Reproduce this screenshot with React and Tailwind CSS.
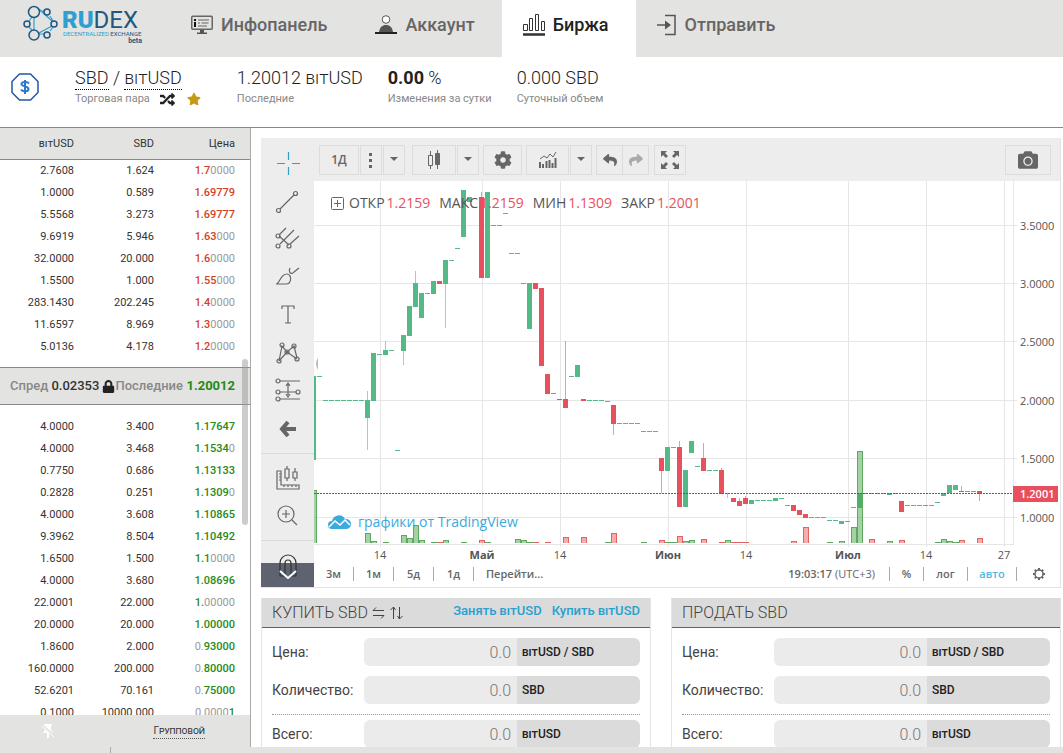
import React, { useState } from "react";
import { FaCamera, FaCog, FaLock, FaRandom, FaReply, FaShare, FaStar } from "react-icons/fa";

const asks = [
    ["2.7608", "1.624", "", "1.7", "0000"],
    ["1.0000", "0.589", "", "1.69779", ""],
    ["5.5568", "3.273", "", "1.69777", ""],
    ["9.6919", "5.946", "", "1.63", "000"],
    ["32.0000", "20.000", "", "1.6", "0000"],
    ["1.5500", "1.000", "", "1.55", "000"],
    ["283.1430", "202.245", "", "1.4", "0000"],
    ["11.6597", "8.969", "", "1.3", "0000"],
    ["5.0136", "4.178", "", "1.2", "0000"],
];

const bids = [
    ["4.0000", "3.400", "", "1.17647", ""],
    ["4.0000", "3.468", "", "1.1534", "0"],
    ["0.7750", "0.686", "", "1.13133", ""],
    ["0.2828", "0.251", "", "1.1309", "0"],
    ["4.0000", "3.608", "", "1.10865", ""],
    ["9.3962", "8.504", "", "1.10492", ""],
    ["1.6500", "1.500", "", "1.1", "0000"],
    ["4.0000", "3.680", "", "1.08696", ""],
    ["22.0001", "22.000", "", "1.", "00000"],
    ["20.0000", "20.000", "", "1.00000", ""],
    ["1.8600", "2.000", "0.", "93000", ""],
    ["160.0000", "200.000", "0.", "80000", ""],
    ["52.6201", "70.161", "0.", "75000", ""],
    ["0.1000", "10000.000", "0.0000", "1", ""],
];

const UP = "#53b987";
const DOWN = "#e8505e";

// [day, direction, body top, body bottom, wick top, wick bottom], day 0 is 14 April
const candles = [
    [-11, 1, 195, 279], [-10, 1, 195, 196],
    [-9, 1, 219, 220], [-8, 1, 219, 220], [-7, 1, 219, 220], [-6, 1, 219, 220],
    [-5, 1, 219, 220], [-4, 1, 219, 220], [-3, 1, 219, 220],
    [-2, 1, 219, 237, 210, 269], [-1, 1, 172, 220], [0, 1, 173, 174], [1, 1, 169, 174, 160, 174],
    [2, 1, 169, 170], [3, 1, 269, 270], [4, 1, 154, 170, 154, 184], [5, 1, 125, 155],
    [6, 1, 102, 126, 90, 126], [7, 1, 112, 137], [8, 1, 112, 113], [9, 1, 100, 113],
    [10, 0, 100, 103], [11, 1, 79, 103, 79, 147], [12, 1, 79, 80], [13, 1, 67, 68],
    [14, 1, 9, 56], [15, 1, 16, 21], [17, 0, 16, 97, 11, 97], [18, 1, 11, 97],
    [19, 1, 44, 45], [20, 1, 44, 45], [21, 1, 32, 33], [22, 1, 72, 73], [23, 1, 72, 73],
    [24, 1, 102, 103], [25, 1, 102, 148], [26, 0, 102, 108], [27, 0, 107, 185],
    [28, 0, 193, 213], [29, 1, 212, 213], [30, 0, 218, 219], [31, 0, 218, 227, 160, 227],
    [32, 1, 195, 196], [33, 1, 184, 196], [34, 0, 218, 220], [35, 1, 219, 220],
    [36, 1, 219, 220], [37, 1, 219, 220], [38, 1, 220, 221], [39, 0, 224, 243, 224, 254],
    [40, 1, 242, 243], [41, 1, 242, 243], [42, 1, 242, 243], [43, 1, 242, 243],
    [44, 1, 250, 251], [45, 1, 250, 251], [46, 1, 250, 251],
    [47, 0, 277, 290, 277, 312], [48, 1, 266, 290], [49, 1, 266, 267],
    [50, 0, 266, 326, 260, 326], [51, 1, 289, 326], [52, 1, 260, 272], [53, 1, 285, 286],
    [54, 0, 277, 290, 262, 290], [55, 1, 289, 290], [56, 1, 289, 290],
    [57, 0, 289, 313, 287, 313], [58, 1, 312, 313, 312, 317], [59, 0, 317, 321],
    [60, 0, 320, 325, 317, 325], [61, 0, 317, 323, 315, 323], [62, 1, 319, 323],
    [63, 1, 319, 320], [64, 1, 319, 320], [65, 1, 319, 320], [66, 1, 317, 320],
    [67, 1, 317, 318], [68, 1, 324, 325], [69, 0, 324, 330], [70, 0, 329, 334],
    [71, 0, 333, 337], [72, 1, 336, 337], [73, 1, 336, 337], [74, 1, 336, 337],
    [75, 1, 339, 340], [76, 1, 339, 340], [77, 1, 340, 343], [78, 1, 340, 341],
    [79, 1, 326, 327], [80, 1, 312, 327], [81, 1, 312, 313], [82, 1, 312, 313],
    [83, 1, 312, 313], [84, 1, 312, 313], [85, 1, 312, 314], [86, 1, 312, 313],
    [87, 0, 320, 331], [88, 1, 324, 325], [89, 1, 324, 325], [90, 1, 324, 325],
    [91, 1, 324, 325], [92, 1, 324, 325], [93, 1, 321, 322], [94, 1, 312, 315],
    [95, 1, 304, 312], [96, 1, 304, 309], [97, 0, 310, 311, 305, 311],
    [98, 1, 310, 311], [99, 1, 310, 311], [100, 0, 310, 313, 310, 320],
];

// [day, direction, bar height]
const volumes = [
    [-11, 1, 53], [-2, 1, 10], [-1, 1, 2], [1, 1, 1], [4, 1, 8], [5, 1, 5], [6, 1, 18], [7, 1, 3],
    [9, 1, 1], [10, 0, 1], [11, 1, 3], [14, 1, 1], [17, 0, 3], [18, 1, 1], [23, 1, 4], [24, 1, 3],
    [25, 1, 1], [26, 0, 1], [28, 0, 1], [31, 0, 6], [34, 0, 6], [38, 1, 1], [39, 0, 10],
    [44, 1, 1], [47, 0, 3], [48, 1, 1], [49, 1, 1], [50, 0, 7], [51, 1, 2], [52, 1, 3],
    [54, 0, 4], [57, 0, 1], [58, 1, 3], [59, 0, 1], [60, 0, 1], [61, 0, 1], [69, 0, 2],
    [71, 0, 16], [75, 1, 1], [77, 1, 2], [79, 1, 16], [80, 1, 92], [82, 0, 4], [85, 1, 2],
    [87, 0, 3], [93, 1, 1], [94, 1, 4], [95, 1, 2], [96, 1, 1], [97, 0, 3], [100, 0, 5],
];

const months = [
    [66, "14"], [168, "Май", true], [246, "14"], [354, "Июн", true],
    [432, "14"], [534, "Июл", true], [612, "14"], [690, "27"],
];

const prices = [
    [44, "3.5000"], [102, "3.0000"], [160, "2.5000"],
    [219, "2.0000"], [277, "1.5000"], [336, "1.0000"],
];

const BitUsd = () => <span className="[font-variant:small-caps]">bitUSD</span>;

const Logo = () => (
    <svg width="122" height="46" viewBox="0 0 122 46" role="img" aria-label="RuDEX">
        <g fill="none" stroke="#2e9fd0" strokeWidth="1.2">
            <path d="M12 17v13M7 21l3-4M7 27l3 3M17 9l13 12M17 33l13-7M17 11l5 0M28 16l3 5M17 34l5 0M28 31l3-4" />
        </g>
        <g fill="none" stroke="#22577e" strokeWidth="1.5">
            <circle cx="12" cy="12" r="5.5" />
            <circle cx="25" cy="12" r="3" />
            <circle cx="5" cy="24" r="3" />
            <circle cx="32" cy="24" r="3" />
            <circle cx="12" cy="35" r="5" />
            <circle cx="25" cy="35" r="3" />
        </g>
        <text x="40" y="28" fontSize="24" fontWeight="900" fill="#2e9fd0">
            RU<tspan fontWeight="400" fill="#22577e">DEX</tspan>
        </text>
        <text x="41" y="36" fontSize="6" fill="#2e9fd0">DECENTRALIZED <tspan fill="#22577e">EXCHANGE</tspan></text>
        <text x="120" y="43" fontSize="7" fontWeight="700" fill="#22577e" textAnchor="end">beta</text>
    </svg>
);

const DashboardIcon = () => (
    <svg width="22" height="20" viewBox="0 0 22 20" fill="none" stroke="#666">
        <rect x=".75" y="1.25" width="20.5" height="13" rx="1" strokeWidth="1.5" />
        <path d="M7 5h11M7 8h2M10.500 8h7M7 11h9" />
        <path d="M4 4v2M4 7v5" stroke="#111" strokeWidth="2" />
        <path d="M9 15h4v2.500h3v1.500H6v-1.500h3z" fill="#555" stroke="none" />
    </svg>
);

const AccountIcon = () => (
    <svg width="22" height="20" viewBox="0 0 22 20">
        <circle cx="11" cy="4.500" r="3.800" fill="#fff" stroke="#555" />
        <path d="M4 17c1-5 3-7 7-7s6 2 7 7z" fill="#555" />
        <path d="M0 18h22" stroke="#222" strokeWidth="2" />
    </svg>
);

const ExchangeIcon = () => (
    <svg width="22" height="22" viewBox="0 0 22 22" fill="none" stroke="#333">
        <path d="M.5 10.500h4v6h-4zM6.500 4.500h3v12h-3zM12.500.5h3v16h-3zM18.500 7.500h3v9h-3z" />
        <path d="M0 20.500h22" strokeWidth="2.500" />
    </svg>
);

const SendIcon = () => (
    <svg width="20" height="22" viewBox="0 0 20 22" fill="none" stroke="#555" strokeWidth="1.500">
        <path d="M8 1.500h10v19H8M0 11h9" />
        <path d="M8 6.500v9l6-4.500z" fill="#555" stroke="none" />
    </svg>
);

const CoinIcon = () => (
    <svg width="28" height="28" viewBox="0 0 28 28" fill="none" stroke="#2457a5">
        <path d="M8.500 1h11L27 8.500v11L19.500 27h-11L1 19.500v-11z" strokeWidth="1.500" />
        <path d="M18 10.500c-1-1.500-6.500-2.500-7.500 0-1 3 7 2.500 7 5.500s-6 3-7.500.5M14 7v14" stroke="#2d78cc" strokeWidth="2" />
    </svg>
);

const tabs = [
    ["Инфопанель", DashboardIcon],
    ["Аккаунт", AccountIcon],
    ["Биржа", ExchangeIcon],
    ["Отправить", SendIcon],
];

const Header = () => {
    const [active, setActive] = useState("Биржа");

    return (
        <header className="flex h-[57px] shrink-0 bg-[#e3e3e1]">
            <a href="#home" className="w-[170px] shrink-0 pl-[22px]"><Logo /></a>
            <nav className="flex">
                {tabs.map(([name, Icon]) => (
                    <button
                        key={name}
                        onClick={() => setActive(name)}
                        className={`flex items-center gap-2 pr-[27px] pb-2 pl-[21px] text-lg font-medium ${active === name ? "bg-white text-[#222]" : "text-[#666]"}`}
                    >
                        <Icon />
                        {name}
                    </button>
                ))}
            </nav>
        </header>
    );
};

const MarketInfo = () => (
    <section className="flex h-[71px] shrink-0 border-b border-[#888] pt-2.5 pl-[11px] text-lg leading-[22px] font-light text-[#222]">
        <div className="mr-9 pt-1.5"><CoinIcon /></div>
        <div className="mr-9">
            <div>
                <a href="#sbd" className="inline-block border-b border-dotted border-black">SBD</a>
                {" / "}
                <a href="#bitusd" className="inline-block border-b border-dotted border-black"><BitUsd /></a>
            </div>
            <div className="flex h-[18px] items-center text-[11px] font-normal text-[#888]">
                Торговая пара
                <button aria-label="Поменять местами" className="ml-2.5 text-[15px] text-[#222]"><FaRandom /></button>
                <button aria-label="В избранное" className="ml-3 text-sm text-[#c79a16]"><FaStar /></button>
            </div>
        </div>
        <div className="mr-[25px]">
            <div>1.20012 <BitUsd /></div>
            <div className="text-[11px] leading-5 font-normal text-[#888]">Последние</div>
        </div>
        <div className="mr-[25px]">
            <div><b className="font-bold">0.00</b> %</div>
            <div className="text-[11px] leading-5 font-normal text-[#888]">Изменения за сутки</div>
        </div>
        <div>
            <div>0.000 SBD</div>
            <div className="text-[11px] leading-5 font-normal text-[#888]">Суточный объем</div>
        </div>
    </section>
);

const Orders = ({ rows, color }) => (
    <tbody>
        {rows.map(([quote, base, lead, price, trail], i) => (
            <tr key={i} className="h-[22px]">
                <td>{quote}</td>
                <td>{base}</td>
                <td className="text-[#999]">
                    {lead}<span className={`font-medium ${color}`}>{price}</span>{trail}
                </td>
            </tr>
        ))}
    </tbody>
);

const Columns = () => (
    <colgroup>
        <col className="w-[74px]" />
        <col className="w-20" />
        <col />
    </colgroup>
);

const OrderBook = () => (
    <aside className="relative flex w-[251px] shrink-0 flex-col border-r border-[#aaa] text-[11px] text-[#333]">
        <div className="border-b border-[#888] bg-[#e3e3e1]">
            <div className="h-[31px]"></div>
        </div>
        <table className="-mt-8 w-[235px] table-fixed text-right">
            <Columns />
            <thead>
                <tr className="h-8">
                    <th className="font-normal"><BitUsd /></th>
                    <th className="font-normal">SBD</th>
                    <th className="font-normal">Цена</th>
                </tr>
            </thead>
            <Orders rows={asks} color="text-[#d5401f]" />
        </table>
        <div className="mt-[9px] flex h-[38px] shrink-0 items-center border-y border-[#888] bg-[#e3e3e1] pr-[15px] pl-2.5 text-[13px] font-medium text-[#888]">
            <span>Спред <span className="text-[#333]">0.02353</span></span>
            <FaLock className="ml-[3px] text-[13px] text-[#222]" />
            <span>Последние</span>
            <b className="ml-auto font-bold text-[#258a16]">1.20012</b>
        </div>
        <div className="min-h-0 flex-1 overflow-hidden pt-[11px]">
            <table className="w-[235px] table-fixed text-right">
                <Columns />
                <Orders rows={bids} color="text-[#258a16]" />
            </table>
        </div>
        <div className="flex h-8 shrink-0 items-center bg-[#e3e3e1]">
            <button aria-label="Открепить" className="ml-10 text-white">
                <svg width="16" height="16" viewBox="0 0 16 16" fill="currentColor">
                    <path d="M4 1h8v2h-1v4l2 3H3l2-3V3H4zM7 10h2v5H7z" />
                    <path d="M2 2l12 11" stroke="#e3e3e1" strokeWidth="2.500" />
                    <path d="M2 3l12 11" stroke="currentColor" />
                </svg>
            </button>
            <button className="mr-[45px] ml-auto border-b border-dotted border-[#555] text-[10px] leading-[14px] [font-variant:small-caps]">Групповой</button>
        </div>
        <div className="absolute top-[231px] right-0.5 h-[166px] w-1.5 rounded-full bg-[#999]/50"></div>
    </aside>
);

const tools = [
    ["Линия тренда", <><path d="M6 22 20 8" /><circle cx="4.500" cy="23.500" r="2" /><circle cx="21.500" cy="6.500" r="2" /></>],
    ["Вилы", <><path d="M5 10l7-7M6 19l14-14M16 19l9-8M5 11l10 9" /><circle cx="4" cy="11" r="2" /><circle cx="4" cy="21" r="2" /><circle cx="15" cy="21" r="2" /></>],
    ["Кисть", <><path d="M2 21c4 0 4-10 11-10 5 0 5 10-1 10zM16 5c-2 5 2 7 4 4l5-4" /></>],
    ["Текст", <><path d="M8 8V5h12v3M14 5v17M11 22h6" /></>],
    ["Фигура", <><path d="M5 22 8 7l5 6 7-6 3 12M5 22l8-9 10 7" /><circle cx="5" cy="22" r="2" /><circle cx="8" cy="6" r="2" /><circle cx="13" cy="13" r="2" /><circle cx="20" cy="7" r="2" /><circle cx="23" cy="20" r="2" /></>],
    ["Позиция", <><path d="M6 4h20M6 15h16M6 22h20M14 7v11M12 9l2-3 2 3M12 17l2 3 2-3" /><circle cx="4" cy="4" r="2" /><circle cx="4" cy="15" r="2" /><circle cx="24" cy="15" r="2" /><circle cx="4" cy="22" r="2" /></>],
    ["Назад", <><path d="M14 7l-6 7 6 7M9 14h13" strokeWidth="4" /></>],
];

const Tool = ({ label, children, color = "text-[#666]" }) => (
    <button aria-label={label} className={`flex h-[38px] w-full shrink-0 items-center justify-center ${color}`}>
        <svg width="28" height="28" viewBox="0 0 28 28" fill="none" stroke="currentColor" strokeWidth="1.200">{children}</svg>
    </button>
);

const DrawingTools = () => (
    <div className="relative flex w-[53px] shrink-0 flex-col bg-[#ededed] pt-1.5">
        <Tool label="Перекрестие" color="text-[#2f9fd0]"><path d="M14.500 3v8M14.500 18v8M3 14.500h8M18 14.500h8" /></Tool>
        {tools.map(([label, shape]) => <Tool key={label} label={label}>{shape}</Tool>)}
        <div className="my-[5px] border-t border-[#dadada]"></div>
        <Tool label="Линейка">
            <path d="M3 7h4v14h18v4H3zM5 10h2M5 13h2M5 16h2M10 21v2M14 21v2M18 21v2M22 21v2M11 5h4v9h-4zM13 2v3M13 14v3M19 8h4v6h-4zM21 4v4M21 14v3" />
        </Tool>
        <Tool label="Увеличить">
            <circle cx="12" cy="12" r="8" /><path d="M18 18l5 5M12 8v8M8 12h8" />
        </Tool>
        <div className="my-[5px] border-t border-[#dadada]"></div>
        <div className="absolute inset-x-0 bottom-0 h-6 bg-[#5f6270]"></div>
        <div className="relative">
            <Tool label="Магнит">
                <path d="M6 25V12a8 8 0 0 1 16 0v13h-5V12a3 3 0 0 0-6 0v13z" stroke="#333" />
                <path d="M6 20l8 7 8-7" stroke="#fff" strokeWidth="2" />
            </Tool>
        </div>
    </div>
);

const ToolButton = ({ label, width, children }) => (
    <button aria-label={label} className={`flex h-[30px] items-center justify-center border border-[#dcdcdc] text-[#666] ${width}`}>{children}</button>
);

const Caret = () => (
    <svg width="8" height="5" viewBox="0 0 8 5" fill="currentColor"><path d="M0 0h8L4 4z" /></svg>
);

const ChartToolbar = () => (
    <div className="flex h-[43px] items-center bg-[#ededed] pr-[9px] pl-[5px] font-['Open_Sans',sans-serif]">
        <div className="flex gap-px">
            <ToolButton label="Интервал" width="w-10"><span className="text-xs font-semibold">1Д</span></ToolButton>
            <ToolButton label="Меню" width="w-[22px]">
                <svg width="4" height="16" viewBox="0 0 4 16" fill="currentColor"><path d="M0 1h3v3H0zM0 7h3v3H0zM0 13h3v3H0z" /></svg>
            </ToolButton>
            <ToolButton label="Выбрать интервал" width="w-[22px]"><Caret /></ToolButton>
        </div>
        <div className="ml-[7px] flex gap-px">
            <ToolButton label="Свечи" width="w-11">
                <svg width="14" height="20" viewBox="0 0 14 20" fill="none" stroke="currentColor">
                    <path d="M1.500 5.500h4v10h-4zM3.500 1v4M3.500 16v3" />
                    <path d="M8.500 3.500h4v11h-4zM10.500 0v4M10.500 15v4" fill="currentColor" />
                </svg>
            </ToolButton>
            <ToolButton label="Тип графика" width="w-[22px]"><Caret /></ToolButton>
        </div>
        <div className="ml-1"><ToolButton label="Настройки" width="w-[39px]"><FaCog className="text-lg" /></ToolButton></div>
        <div className="ml-1 flex gap-px">
            <ToolButton label="Индикаторы" width="w-[43px]">
                <svg width="18" height="16" viewBox="0 0 18 16" fill="none" stroke="currentColor">
                    <path d="M1 16v-6M4 16v-4M7.500 16V9M10.500 16V8M13.500 16v-5M16.500 16V6" strokeWidth="2" />
                    <path d="M1 7l4-3 3 2 3-4 3 3 3-5" />
                </svg>
            </ToolButton>
            <ToolButton label="Список индикаторов" width="w-[22px]"><Caret /></ToolButton>
        </div>
        <div className="ml-1 flex">
            <ToolButton label="Отменить" width="w-[27px]"><FaReply className="text-sm" /></ToolButton>
            <button aria-label="Повторить" className="flex h-[30px] w-[26px] items-center justify-center border border-l-0 border-[#dcdcdc] text-sm text-[#aaa]"><FaShare /></button>
        </div>
        <div className="ml-[5px]">
            <ToolButton label="На весь экран" width="w-8">
                <svg width="18" height="18" viewBox="0 0 18 18" fill="currentColor">
                    <path d="M0 0h6L4 2l3 3-2 2-3-3-2 2zM18 0v6l-2-2-3 3-2-2 3-3-2-2zM0 18v-6l2 2 3-3 2 2-3 3 2 2zM18 18h-6l2-2-3-3 2-2 3 3 2-2z" />
                </svg>
            </ToolButton>
        </div>
        <div className="ml-auto"><ToolButton label="Снимок" width="w-[46px]"><FaCamera className="text-xl" /></ToolButton></div>
    </div>
);

const Plot = () => (
    <svg viewBox="0 0 746 384" className="block w-full" shapeRendering="crispEdges" fontFamily="Open Sans, sans-serif" fontSize="11">
        <g fill="#e6e6e6">
            {months.map(([x]) => <rect key={x} x={x} y="0" width="1" height="366" />)}
            {prices.map(([y]) => <rect key={y} x="0" y={y} width="703" height="1" />)}
            <rect x="699" y="0" width="1" height="363" />
            <rect x="0" y="363" width="700" height="1" />
        </g>
        {candles.map(([day, up, top, bottom, high, low]) => (
            <g key={day} fill={up ? UP : DOWN}>
                {high !== undefined && <rect x={65 + day * 6} y={high} width="1" height={low - high} opacity=".6" />}
                <rect x={63 + day * 6} y={top} width="5" height={bottom - top} />
            </g>
        ))}
        {volumes.map(([day, up, h]) => (
            <g key={day} fill={up ? "#4ca64c" : "#f05a5a"}>
                <rect x={63 + day * 6} y={362 - h} width="6" height={h} opacity=".5" />
                <path d={`M${63.5 + day * 6} 362v${0.5 - h}h5v${h - 0.5}`} fill="none" stroke={up ? "#5fa862" : "#e06464"} />
            </g>
        ))}
        <path d="M0 312.500h700" fill="none" stroke="#c9303a" strokeDasharray="2 1" />
        <path d="M4 177q-4 5 0 12z" fill="#bbb" shapeRendering="auto" />
        <g fill="#555">
            {prices.map(([y, label]) => <text key={label} x="706" y={y + 5}>{label}</text>)}
            {months.map(([x, label, bold]) => (
                <text key={x} x={x} y="378" textAnchor="middle" fontWeight={bold ? 700 : 400}>{label}</text>
            ))}
        </g>
        <rect x="699" y="305" width="45" height="16" fill={DOWN} />
        <text x="706" y="317" fill="#fff" fontWeight="600">1.2001</text>
    </svg>
);

const legend = [["ОТКР", "1.2159"], ["МАКС", "1.2159"], ["МИН", "1.1309"], ["ЗАКР", "1.2001"]];

const Chart = () => (
    <section className="flex border border-[#e4e4e4] border-t-0 border-l-0">
        <DrawingTools />
        <div className="flex min-w-0 flex-1 flex-col">
            <ChartToolbar />
            <div className="relative font-['Open_Sans',sans-serif]">
                <Plot />
                <div className="absolute top-3 left-[17px] flex items-center gap-[9px] text-sm leading-5 text-[#555]">
                    <button aria-label="Развернуть" className="-mr-1">
                        <svg width="13" height="13" viewBox="0 0 13 13" fill="none" stroke="#666"><rect x=".5" y=".5" width="12" height="12" rx="1" /><path d="M6.500 3v7M3 6.500h7" /></svg>
                    </button>
                    {legend.map(([name, value]) => (
                        <span key={name} className="flex gap-0.5">{name}<span className="text-[#e8505e]">{value}</span></span>
                    ))}
                </div>
                <a href="#tradingview" className="absolute bottom-[33px] left-3.5 flex items-center gap-[7px] text-sm leading-5 text-[#3caadb]">
                    <svg width="23" height="14" viewBox="0 0 23 14">
                        <path d="M4 14a4 4 0 0 1 0-8 7 7 0 0 1 13-2 5 5 0 0 1 2 10z" fill="#3caadb" />
                        <path d="M1 12l6-6 5 4 5-5 5 5" fill="none" stroke="#fff" strokeWidth="1.500" />
                    </svg>
                    графики от TradingView
                </a>
            </div>
            <div className="flex h-[22px] items-center pb-1 font-['Open_Sans',sans-serif] text-[11px] leading-[14px] font-semibold text-[#666]">
                {["3м", "1м", "5д", "1д"].map(range => (
                    <button key={range} className="w-10 border-r border-[#aaa] text-center">{range}</button>
                ))}
                <button className="ml-3">Перейти...</button>
                <span className="mr-3.5 ml-auto">19:03:17 <span className="font-normal">(UTC+3)</span></span>
                <button className="w-[34px] border-l border-[#aaa]">%</button>
                <button className="w-11 border-l border-[#aaa]">лог</button>
                <button className="w-[49px] border-l border-[#aaa] text-[#4db8df]">авто</button>
                <button aria-label="Параметры" className="flex h-[14px] w-11 items-center justify-center border-l border-[#aaa]">
                    <svg width="14" height="14" viewBox="0 0 14 14" fill="none" stroke="currentColor" strokeWidth="1.500">
                        <circle cx="7" cy="7" r="4" />
                        <path d="M7 1v2M7 11v2M1 7h2M11 7h2M2.800 2.800l1.400 1.400M9.800 9.800l1.400 1.400M2.800 11.200l1.400-1.400M9.800 4.200l1.400-1.400" strokeWidth="2" />
                    </svg>
                </button>
            </div>
        </div>
    </section>
);

const Field = ({ id, label, children }) => (
    <div className="flex h-7 items-center">
        <label htmlFor={id} className="w-[92px] shrink-0 text-sm text-[#444]">{label}</label>
        <input
            id={id}
            placeholder="0.0"
            className="h-7 min-w-0 flex-1 rounded-l-md bg-[#ebebeb] pr-1.5 text-right font-light text-[#444] placeholder:text-[#777]"
        />
        <span className="h-7 w-[123px] rounded-r-md bg-[#dbdbdb] pl-[5px] text-xs leading-[29px] font-medium text-[#222]">{children}</span>
    </div>
);

const OrderForm = ({ id, title, line, children }) => (
    <form className="border-x border-[#e4e4e4]">
        <div className={`flex h-[30px] items-center border-b bg-[#dbdbdb] px-2.5 ${line}`}>
            <h2 className="text-base font-light text-[#444]">{title}</h2>
            {children}
        </div>
        <div className="flex flex-col gap-2.5 px-2.5 pt-2.5">
            <Field id={`${id}-price`} label="Цена:"><BitUsd /> / SBD</Field>
            <Field id={`${id}-amount`} label="Количество:">SBD</Field>
            <div className="border-t border-dotted border-[#999] pt-[5px]">
                <Field id={`${id}-total`} label="Всего:"><BitUsd /></Field>
            </div>
        </div>
    </form>
);

const App = () => (
    <div className="flex h-screen flex-col overflow-hidden bg-white font-[Roboto,sans-serif]">
        <Header />
        <MarketInfo />
        <main className="flex min-h-0 flex-1">
            <OrderBook />
            <div className="flex min-w-0 flex-1 flex-col gap-2.5 overflow-hidden pt-2.5 pr-0.5 pl-2.5">
                <Chart />
                <div className="grid grid-cols-2 gap-5">
                    <OrderForm id="buy" title="КУПИТЬ SBD" line="border-[#2b8a1e]">
                        <button type="button" aria-label="Поменять валюты" className="ml-1 text-[#444]">
                            <svg width="32" height="14" viewBox="0 0 32 14" fill="none" stroke="currentColor">
                                <path d="M12 4.500H1l3-3M1 9.500h11l-3 3M21.500 13V1l-3 3M21.500 1l2 3M27.500 1v12l-2-3M27.500 13l3-3" />
                            </svg>
                        </button>
                        <div className="ml-auto flex gap-2.5 pb-1 text-[13px] font-medium text-[#2aa0cf]">
                            <a href="#borrow">Занять <BitUsd /></a>
                            <a href="#buy">Купить <BitUsd /></a>
                        </div>
                    </OrderForm>
                    <OrderForm id="sell" title="ПРОДАТЬ SBD" line="border-[#c93a22]" />
                </div>
            </div>
        </main>
        <footer className="h-1.5 shrink-0 bg-[#e3e3e1]">
            <div className="h-full w-[111px] border-r border-[#aaa]"></div>
        </footer>
    </div>
);

export default App;
